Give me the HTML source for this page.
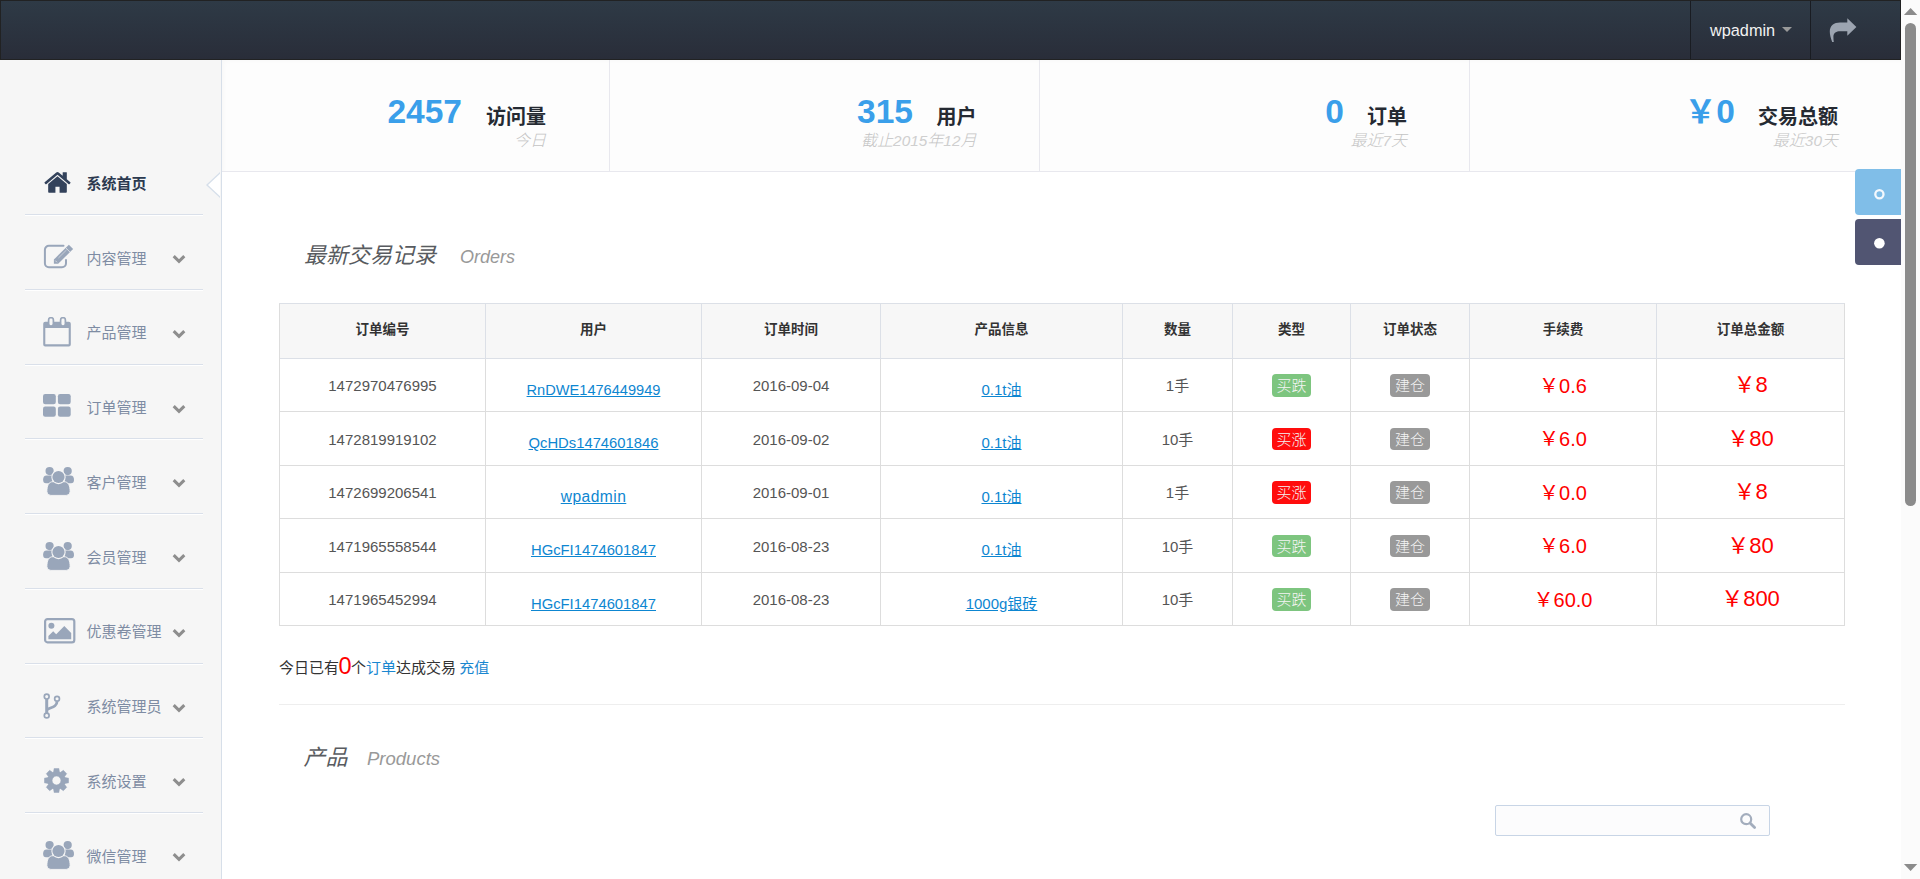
<!DOCTYPE html>
<html lang="zh-CN">
<head>
<meta charset="utf-8">
<title>系统首页</title>
<style>
*{box-sizing:border-box}
html,body{margin:0;padding:0;width:1920px;height:879px;overflow:hidden;background:#fff}
body{position:relative;font-family:"Liberation Sans","Noto Sans CJK SC",sans-serif;font-size:15px;color:#555;line-height:20px}
a{color:#0d86d1;text-decoration:underline}
ul{list-style:none;margin:0;padding:0}
.abs{position:absolute}

/* header */
#head-nav{position:absolute;left:0;top:0;width:1901px;height:60px;border:1px solid #212223;background:linear-gradient(#2e3a46,#292d39)}
#head-nav .sep{position:absolute;top:0;width:1px;height:58px;background:#191c22}
#head-nav .user{position:absolute;left:1709px;top:19px;font-size:16.3px;line-height:20px;color:#f2f2f2}
#head-nav .caret{position:absolute;left:1781px;top:26px;width:0;height:0;border-left:5px solid transparent;border-right:5px solid transparent;border-top:5px solid #999}
#head-nav svg.share{position:absolute;left:1827px;top:16px}

/* sidebar */
#sidebar{position:absolute;left:0;top:60px;width:222px;height:819px;background:#f6f6f6;border-right:1px solid #d7dfe9}
#sidebar li{position:absolute;left:0;width:221px;height:75px}
#sidebar li .t{position:absolute;left:86.500px;top:24.500px;font-size:15px;line-height:20px;color:#7e8ca3;white-space:nowrap}
#sidebar li.on .t{font-weight:bold;color:#2c3a50}
#sidebar li .line{position:absolute;left:25px;top:64.750px;width:178px;height:1px;background:#dae0ea;box-shadow:0 1px 0 #fff}
#sidebar li svg.ic{position:absolute;left:43px}
#sidebar li svg.chev{position:absolute;left:172.300px;top:30.100px}
#sidebar .arrow{position:absolute;left:206.300px;top:112px;width:14px;height:26px;overflow:hidden}
#sidebar .arrow i{position:absolute;left:0;top:0;width:0;height:0;border-style:solid;border-width:13px 14px 13px 0;border-color:transparent #d6dfea transparent transparent}
#sidebar .arrow i+i{left:1.800px;border-right-color:#fff}


#sidebar li svg.ic{color:#99a6ba;fill:#99a6ba}
#sidebar li.on svg.ic{color:#33425b;fill:#33425b}
#sidebar li svg.chev{color:#8e8e8e}
svg.ic-home{width:29px;height:29px;top:18.600px;left:42.700px!important}
svg.ic-edit{width:33px;height:27px;top:19.000px;left:42px!important}
svg.ic-cal{width:28px;height:30px;top:18.100px;left:43.400px!important}
svg.ic-th{width:28px;height:23px;top:20.700px;left:43.400px!important}
svg.ic-users{width:31px;height:29px;top:18.800px;left:43.400px!important}
svg.ic-pic{width:32px;height:26px;top:20.400px;left:43.700px!important}
svg.ic-fork{width:18px;height:27px;top:19.400px;left:43.200px!important}
svg.ic-cog{width:25px;height:25px;top:20.900px;left:43.800px!important}

/* main */
.stat .sub i{color:#cfcfcf;font-size:15.400px}
#stats{position:absolute;left:222px;top:60px;width:1679px;height:112px;background:#fdfdfd;border-bottom:1px solid #e8e8ee;box-shadow:inset 5px 4px 5px -3px rgba(0,0,0,.025)}
#stats .vs{position:absolute;top:0;width:1px;height:111px;background:#e8e8ee}
.stat{position:absolute;top:60px;height:111px;white-space:nowrap;text-align:right}
.stat .num{position:absolute;right:0;top:0;font-weight:bold;color:#3a9fea;font-size:33.5px;line-height:40px}
.stat .lab{font-weight:bold;color:#252a32;font-size:20px;line-height:26px}
.stat .sub{font-style:italic;color:#c4c4c4;font-size:16px;line-height:20px;font-weight:300;position:relative;top:1px}

.side-btn{position:absolute;left:1855px;width:46px;height:46px;border-radius:4px 0 0 4px}

h3.sec{position:absolute;margin:0;font-weight:400;font-style:italic;font-size:22px;line-height:30px;color:#585b60;white-space:nowrap}
h3.sec small{font-size:18px;color:#999;margin-left:24px;font-weight:normal}

/* table */
#tbl{position:absolute;left:279px;top:303px;width:1566px;height:323px;border:1px solid #ddd;border-top-color:#dce0e7;background:#fff}
#tbl .hd{position:absolute;left:0;top:0;width:1564px;height:55px;background:#f7f7f7}
#tbl .h{position:absolute;left:0;width:1564px;height:1px;background:#ddd}
#tbl .hb{background:#dce0e7}
#tbl .v{position:absolute;top:0;width:1px;height:321px;background:linear-gradient(#dce0e7 55px,#ddd 55px)}
#tbl .c{position:absolute;text-align:center;white-space:nowrap;font-size:15px;line-height:20px;color:#555}
#tbl .th{font-weight:bold;font-size:13.5px;color:#333}
#tbl .lk{font-size:14.600px}
#tbl .lbl{display:inline-block;font-size:15px;line-height:15px;color:#f4f4f4;padding:4.300px 4.500px 3.700px;border-radius:4px;font-weight:300}
#tbl .g{background:#7dc57f}
#tbl .r{background:#ff0d0d}
#tbl .k{background:#999}
#tbl .m1{color:#f00;font-size:20px}
#tbl .m2{color:#f00;font-size:22px}

#note{position:absolute;left:279px;top:653px;word-spacing:-0.800px;font-size:15px;line-height:30px;color:#333;white-space:nowrap}
#note a{text-decoration:none;color:#1a87d0}
#note b{font-weight:normal;color:#f00;font-size:23.500px;line-height:0;margin:0 -0.600px;position:relative;top:0.500px}
#hr{position:absolute;left:279px;top:704px;width:1566px;height:1px;background:#eee}
#search{position:absolute;left:1495px;top:805px;width:275px;height:31px;border:1px solid #c8d5e6;border-radius:2px;background:#fcfcfd}

/* fake scrollbar */
#sb{position:absolute;left:1901px;top:0;width:19px;height:879px;background:#fbfbfb}
#sb .thumb{position:absolute;left:4px;top:23px;width:11px;height:483px;border-radius:6px;background:#8b8b8b}
#sb .up{position:absolute;left:3px;top:8px;width:0;height:0;border-left:6.5px solid transparent;border-right:6.5px solid transparent;border-bottom:7px solid #8b8b8b}
#sb .dn{position:absolute;left:3px;top:865px;width:0;height:0;border-left:6.5px solid transparent;border-right:6.5px solid transparent;border-top:7px solid #6b6b6b}
</style>
</head>
<body>
<svg width="0" height="0" style="position:absolute">
<defs>
<symbol id="i-home" viewBox="0 0 1792 1792"><path d="M1472 992v480q0 26-19 45t-45 19h-384v-384h-256v384h-384q-26 0-45-19t-19-45v-480q0-1 .5-3t.5-3l575-474 575 474q1 2 1 6zm223-69l-62 74q-8 9-21 11h-3q-13 0-21-7l-692-577-692 577q-12 8-24 7-13-2-21-11l-62-74q-8-10-7-23.500t11-21.500l719-599q32-26 76-26t76 26l244 204v-195q0-14 9-23t23-9h192q14 0 23 9t9 23v408l219 182q10 8 11 21.500t-7 23.500z"/></symbol>
<symbol id="i-edit" viewBox="0 0 33 27"><path d="M21.500 2.800 H6.900 A4 4 0 0 0 2.900 6.800 V20.200 A4 4 0 0 0 6.900 24.200 H20 A4 4 0 0 0 24 20.200 V16.900" fill="none" stroke="currentColor" stroke-width="2" stroke-linecap="round"/><path d="M11.900 20.700 V16.400 L26.880 1.780 L31.120 6.020 L16.200 20.700 Z" fill="currentColor"/><path d="M16.400 15 L24.600 6.900" stroke="#f6f6f6" stroke-width="0.700" opacity="0.700" fill="none"/><path d="M13.300 17.600 L15 19.300" stroke="#f6f6f6" stroke-width="0.800" opacity="0.800" fill="none"/><path d="M23.780 4.880 L28.020 9.120" stroke="#f6f6f6" stroke-width="0.800" opacity="0.850" fill="none"/></symbol>
<symbol id="i-cal" viewBox="0 0 28 30"><path d="M0.200 6.700 A2 2 0 0 1 2.200 4.700 H25.800 A2 2 0 0 1 27.800 6.700 V27.400 A2 2 0 0 1 25.800 29.400 H2.200 A2 2 0 0 1 0.200 27.400 Z M2.300 10.900 V27.300 H25.700 V10.900 Z" fill="currentColor" fill-rule="evenodd"/><rect x="5.600" y="0.700" width="4.800" height="8.300" rx="2.200" fill="#f6f6f6" stroke="currentColor" stroke-width="1.700"/><rect x="17.600" y="0.700" width="4.800" height="8.300" rx="2.200" fill="#f6f6f6" stroke="currentColor" stroke-width="1.700"/></symbol>
<symbol id="i-th" viewBox="0 0 28 23"><rect x="0" y="0" width="12.800" height="10.200" rx="2.200"/><rect x="14.900" y="0" width="12.800" height="10.200" rx="2.200"/><rect x="0" y="12.500" width="12.800" height="10.200" rx="2.200"/><rect x="14.900" y="12.500" width="12.800" height="10.200" rx="2.200"/></symbol>
<symbol id="i-users" viewBox="0 0 31 29"><circle cx="6.600" cy="4.100" r="4.100"/><circle cx="24.700" cy="4.100" r="4.100"/><path d="M0.100 12.800 Q0.100 8.500 3.600 8.500 H9.500 V16.300 H3 Q0.100 16.300 0.100 12.800Z"/><path d="M31 12.800 Q31 8.500 27.500 8.500 H21.500 V16.300 H28.100 Q31 16.300 31 12.800Z"/><path d="M3.900 24.600 C3.900 19 5.400 14.700 10 14.700 H21 C25.600 14.700 27.100 19 27.100 24.600 Q27.100 28.400 23.200 28.400 H7.800 Q3.900 28.400 3.900 24.600Z" stroke="#f6f6f6" stroke-width="0.900"/><circle cx="15.500" cy="10" r="7.200" fill="#f6f6f6"/><circle cx="15.500" cy="10" r="6.100"/></symbol>
<symbol id="i-pic" viewBox="0 0 32 26"><rect x="1.100" y="1.100" width="29.200" height="23.200" rx="2.400" fill="none" stroke="currentColor" stroke-width="2.200"/><circle cx="7.400" cy="7.800" r="3"/><path d="M4.400 21.200 V18 L9.200 13.200 L12.200 16.200 L20.300 8.100 L27.200 15 V21.200 Z"/></symbol>
<symbol id="i-fork" viewBox="0 0 18 27"><g fill="none" stroke="currentColor"><circle cx="3.700" cy="4.600" r="2.400" stroke-width="1.700"/><circle cx="3.700" cy="23.500" r="2.400" stroke-width="1.700"/><circle cx="14.050" cy="6.800" r="2.400" stroke-width="1.700"/><path d="M3.700 7 V21.100" stroke-width="3"/><path d="M14.050 9.200 C14.050 14.800 8.500 15.200 4.300 17.400" stroke-width="2.800"/></g></symbol>
<symbol id="i-cog" viewBox="0 0 25 25"><path fill-rule="evenodd" d="M9.55 3.89 L10.14 0.43 L14.86 0.43 L15.45 3.89 L16.50 4.33 L19.37 2.30 L22.70 5.63 L20.67 8.50 L21.11 9.55 L24.57 10.14 L24.57 14.86 L21.11 15.45 L20.67 16.50 L22.70 19.37 L19.37 22.70 L16.50 20.67 L15.45 21.11 L14.86 24.57 L10.14 24.57 L9.55 21.11 L8.50 20.67 L5.63 22.70 L2.30 19.37 L4.33 16.50 L3.89 15.45 L0.43 14.86 L0.43 10.14 L3.89 9.55 L4.33 8.50 L2.30 5.63 L5.63 2.30 L8.50 4.33Z M12.500 8.100 A4.400 4.400 0 1 0 12.500 16.900 A4.400 4.400 0 1 0 12.500 8.100Z" stroke="currentColor" stroke-width="0.500" stroke-linejoin="round"/></symbol>
<symbol id="i-chev" viewBox="0 0 14 10"><path d="M1.700 2.100 L7 7.400 L12.300 2.100" fill="none" stroke="currentColor" stroke-width="3"/></symbol>
</defs>
</svg>

<div id="sidebar">
<ul id="menu">
<li class="on" style="top:89.25px"><svg class="ic ic-home"><use href="#i-home"/></svg><span class="t">系统首页</span><div class="line"></div></li>
<li style="top:164.00px"><svg class="ic ic-edit"><use href="#i-edit"/></svg><span class="t">内容管理</span><svg class="chev" width="14" height="10"><use href="#i-chev"/></svg><div class="line"></div></li>
<li style="top:238.75px"><svg class="ic ic-cal"><use href="#i-cal"/></svg><span class="t">产品管理</span><svg class="chev" width="14" height="10"><use href="#i-chev"/></svg><div class="line"></div></li>
<li style="top:313.50px"><svg class="ic ic-th"><use href="#i-th"/></svg><span class="t">订单管理</span><svg class="chev" width="14" height="10"><use href="#i-chev"/></svg><div class="line"></div></li>
<li style="top:388.25px"><svg class="ic ic-users"><use href="#i-users"/></svg><span class="t">客户管理</span><svg class="chev" width="14" height="10"><use href="#i-chev"/></svg><div class="line"></div></li>
<li style="top:463.00px"><svg class="ic ic-users"><use href="#i-users"/></svg><span class="t">会员管理</span><svg class="chev" width="14" height="10"><use href="#i-chev"/></svg><div class="line"></div></li>
<li style="top:537.75px"><svg class="ic ic-pic"><use href="#i-pic"/></svg><span class="t">优惠卷管理</span><svg class="chev" width="14" height="10"><use href="#i-chev"/></svg><div class="line"></div></li>
<li style="top:612.50px"><svg class="ic ic-fork"><use href="#i-fork"/></svg><span class="t">系统管理员</span><svg class="chev" width="14" height="10"><use href="#i-chev"/></svg><div class="line"></div></li>
<li style="top:687.25px"><svg class="ic ic-cog"><use href="#i-cog"/></svg><span class="t">系统设置</span><svg class="chev" width="14" height="10"><use href="#i-chev"/></svg><div class="line"></div></li>
<li style="top:762.00px"><svg class="ic ic-users"><use href="#i-users"/></svg><span class="t">微信管理</span><svg class="chev" width="14" height="10"><use href="#i-chev"/></svg><div class="line"></div></li>
</ul>
<div class="arrow"><i></i><i></i></div>
</div>

<div id="stats">
<div class="vs" style="left:387px"></div>
<div class="vs" style="left:817px"></div>
<div class="vs" style="left:1247px"></div>
</div>


<div class="stat" style="left:300px;width:246px"><div class="num" style="right:84px;top:32px">2457</div><div class="lab" style="margin-top:44px">访问量</div><div class="sub">今日</div></div>
<div class="stat" style="left:700px;width:276.500px"><div class="num" style="right:63.500px;top:32px">315</div><div class="lab" style="margin-top:44px">用户</div><div class="sub">截止<i>2015</i>年<i>12</i>月</div></div>
<div class="stat" style="left:1130px;width:277px"><div class="num" style="right:63px;top:32px">0</div><div class="lab" style="margin-top:44px">订单</div><div class="sub">最近<i>7</i>天</div></div>
<div class="stat" style="left:1560px;width:278px"><div class="num" style="right:103px;top:32px"><span style="font-size:31.5px">￥</span>0</div><div class="lab" style="margin-top:44px">交易总额</div><div class="sub">最近<i>30</i>天</div></div>

<div class="side-btn" style="top:169px;background:#80bee8"><svg width="46" height="46" style="display:block"><circle cx="24.400" cy="25.300" r="4.100" fill="none" stroke="#f4f9fd" stroke-width="2.300"/></svg></div>
<div class="side-btn" style="top:219px;background:#515572"><svg width="46" height="46" style="display:block"><circle cx="24.400" cy="24.300" r="5.300" fill="#fff"/></svg></div>

<h3 class="sec" style="left:304px;top:241px">最新交易记录<small>Orders</small></h3>
<div id="tbl">
<div class="hd"></div>
<div class="v" style="left:205px"></div>
<div class="v" style="left:421px"></div>
<div class="v" style="left:600px"></div>
<div class="v" style="left:842px"></div>
<div class="v" style="left:952px"></div>
<div class="v" style="left:1070px"></div>
<div class="v" style="left:1189px"></div>
<div class="v" style="left:1376px"></div>
<div class="h hb" style="top:54px"></div>
<div class="h" style="top:107px"></div>
<div class="h" style="top:161px"></div>
<div class="h" style="top:214px"></div>
<div class="h" style="top:268px"></div>
<div class="c th" style="left:-1px;width:207px;top:16.0px">订单编号</div>
<div class="c th" style="left:205px;width:217px;top:16.0px">用户</div>
<div class="c th" style="left:421px;width:180px;top:16.0px">订单时间</div>
<div class="c th" style="left:600px;width:243px;top:16.0px">产品信息</div>
<div class="c th" style="left:842px;width:111px;top:16.0px">数量</div>
<div class="c th" style="left:952px;width:119px;top:16.0px">类型</div>
<div class="c th" style="left:1070px;width:120px;top:16.0px">订单状态</div>
<div class="c th" style="left:1189px;width:188px;top:16.0px">手续费</div>
<div class="c th" style="left:1376px;width:189px;top:16.0px">订单总金额</div>
<div class="c" style="left:-1px;width:207px;top:72.2px">1472970476995</div>
<div class="c lk" style="left:205px;width:217px;top:75.6px"><a>RnDWE1476449949</a></div>
<div class="c" style="left:421px;width:180px;top:72.2px">2016-09-04</div>
<div class="c lk" style="left:600px;width:243px;top:75.6px"><a style="font-size:15px">0.1t油</a></div>
<div class="c" style="left:842px;width:111px;top:72.2px">1手</div>
<div class="c" style="left:952px;width:119px;top:70.0px"><span class="lbl g">买跌</span></div>
<div class="c" style="left:1070px;width:120px;top:70.0px"><span class="lbl k">建仓</span></div>
<div class="c m1" style="left:1189px;width:188px;top:71.5px">￥0.6</div>
<div class="c m2" style="left:1376px;width:189px;top:71.0px">￥8</div>
<div class="c" style="left:-1px;width:207px;top:125.7px">1472819919102</div>
<div class="c lk" style="left:205px;width:217px;top:129.1px"><a style="font-size:14.8px">QcHDs1474601846</a></div>
<div class="c" style="left:421px;width:180px;top:125.7px">2016-09-02</div>
<div class="c lk" style="left:600px;width:243px;top:129.1px"><a style="font-size:15px">0.1t油</a></div>
<div class="c" style="left:842px;width:111px;top:125.7px">10手</div>
<div class="c" style="left:952px;width:119px;top:123.5px"><span class="lbl r">买涨</span></div>
<div class="c" style="left:1070px;width:120px;top:123.5px"><span class="lbl k">建仓</span></div>
<div class="c m1" style="left:1189px;width:188px;top:125.0px">￥6.0</div>
<div class="c m2" style="left:1376px;width:189px;top:124.5px">￥80</div>
<div class="c" style="left:-1px;width:207px;top:179.2px">1472699206541</div>
<div class="c lk" style="left:205px;width:217px;top:182.6px"><a style="font-size:15.6px;letter-spacing:0.45px">wpadmin</a></div>
<div class="c" style="left:421px;width:180px;top:179.2px">2016-09-01</div>
<div class="c lk" style="left:600px;width:243px;top:182.6px"><a style="font-size:15px">0.1t油</a></div>
<div class="c" style="left:842px;width:111px;top:179.2px">1手</div>
<div class="c" style="left:952px;width:119px;top:177.0px"><span class="lbl r">买涨</span></div>
<div class="c" style="left:1070px;width:120px;top:177.0px"><span class="lbl k">建仓</span></div>
<div class="c m1" style="left:1189px;width:188px;top:178.5px">￥0.0</div>
<div class="c m2" style="left:1376px;width:189px;top:178.0px">￥8</div>
<div class="c" style="left:-1px;width:207px;top:232.7px">1471965558544</div>
<div class="c lk" style="left:205px;width:217px;top:236.1px"><a style="font-size:14.8px">HGcFI1474601847</a></div>
<div class="c" style="left:421px;width:180px;top:232.7px">2016-08-23</div>
<div class="c lk" style="left:600px;width:243px;top:236.1px"><a style="font-size:15px">0.1t油</a></div>
<div class="c" style="left:842px;width:111px;top:232.7px">10手</div>
<div class="c" style="left:952px;width:119px;top:230.5px"><span class="lbl g">买跌</span></div>
<div class="c" style="left:1070px;width:120px;top:230.5px"><span class="lbl k">建仓</span></div>
<div class="c m1" style="left:1189px;width:188px;top:232.0px">￥6.0</div>
<div class="c m2" style="left:1376px;width:189px;top:231.5px">￥80</div>
<div class="c" style="left:-1px;width:207px;top:286.2px">1471965452994</div>
<div class="c lk" style="left:205px;width:217px;top:289.6px"><a style="font-size:14.8px">HGcFI1474601847</a></div>
<div class="c" style="left:421px;width:180px;top:286.2px">2016-08-23</div>
<div class="c lk" style="left:600px;width:243px;top:289.6px"><a style="font-size:15px">1000g银砖</a></div>
<div class="c" style="left:842px;width:111px;top:286.2px">10手</div>
<div class="c" style="left:952px;width:119px;top:284.0px"><span class="lbl g">买跌</span></div>
<div class="c" style="left:1070px;width:120px;top:284.0px"><span class="lbl k">建仓</span></div>
<div class="c m1" style="left:1189px;width:188px;top:285.5px">￥60.0</div>
<div class="c m2" style="left:1376px;width:189px;top:285.0px">￥800</div>
</div><!--/tbl-->
<div id="note">今日已有<b>0</b>个<a>订单</a>达成交易 <a>充值</a></div>
<div id="hr"></div>
<h3 class="sec" style="left:303.500px;top:743px">产品<small style="margin-left:19.500px;font-size:18.500px">Products</small></h3>
<div id="search"><svg width="18" height="18" viewBox="0 0 18 18" style="position:absolute;left:243px;top:6px"><circle cx="7.200" cy="7.200" r="5" fill="none" stroke="#a3adbd" stroke-width="2.200"/><path d="M11 11 L15.600 15.600" stroke="#a3adbd" stroke-width="2.800" stroke-linecap="round"/></svg></div>

<div id="head-nav">
<svg class="share" width="30" height="27" viewBox="0 0 30 27"><path d="M19.300 1.200 L28.400 10.100 L19.300 18.700 V14.200 H12 C8.500 14.200 5.400 15.600 5.400 20 C5.400 22 5.600 23.600 5.800 25.100 H4.200 C2.600 21 1.800 17.600 1.800 14.600 C1.800 8.600 6 5.500 12 5.500 H19.300 Z" fill="#9ca4b0"/></svg>
<div class="sep" style="left:1689px"></div>
<div class="sep" style="left:1809px"></div>
<span class="user">wpadmin</span><span class="caret"></span>
</div>

<div id="sb"><svg width="19" height="879" style="position:absolute;left:0;top:0"><path d="M2.900 15.100 L9.600 8 L16.300 15.100 Z" fill="#8b8b8b"/><path d="M2.900 864 L9.600 871.100 L16.300 864 Z" fill="#8b8b8b"/></svg><div class="thumb"></div></div>

</body>
</html>
